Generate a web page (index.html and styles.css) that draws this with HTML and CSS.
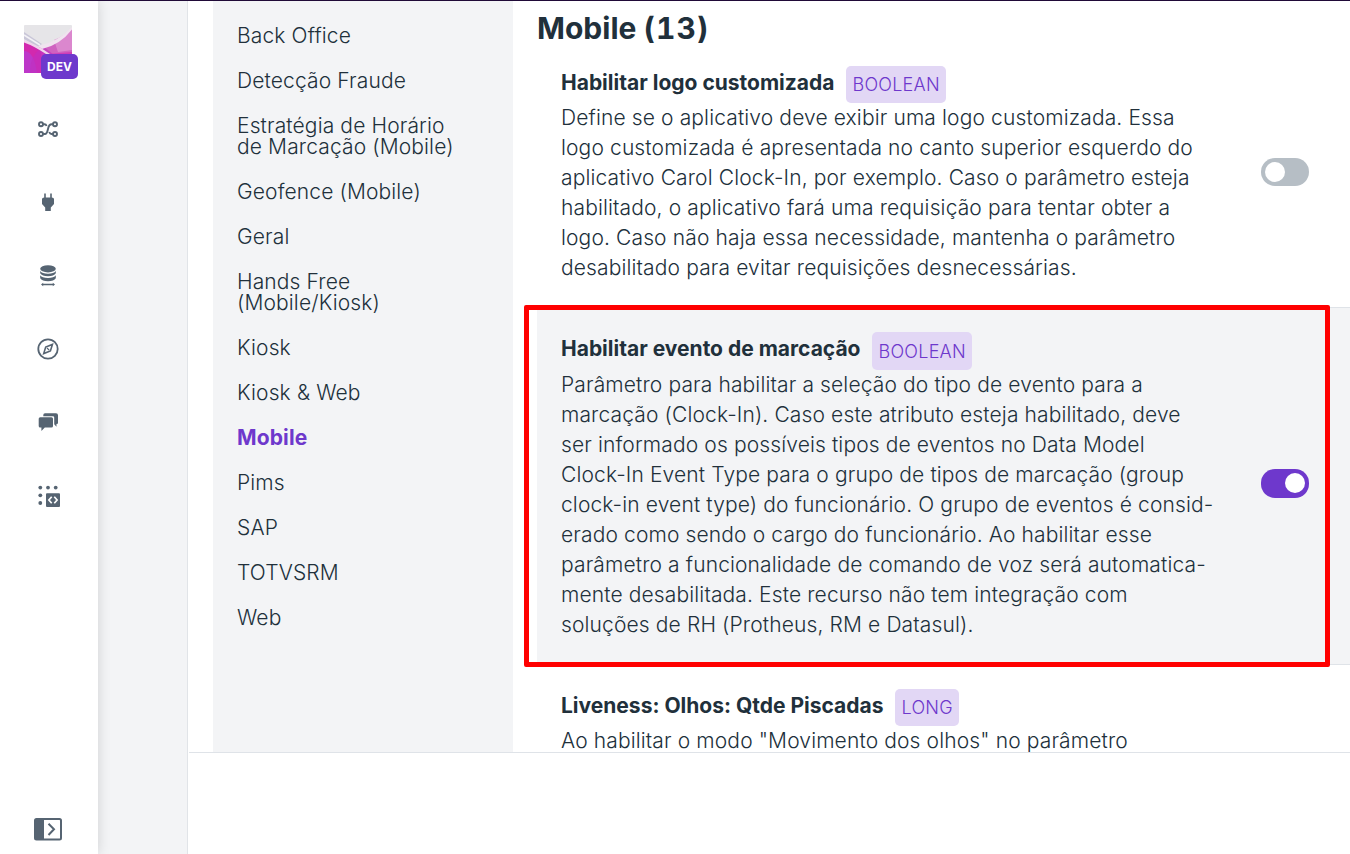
FILE: index.html
```html
<!DOCTYPE html>
<html lang="pt-BR">
  <head>
    <meta charset="utf-8" />
    <meta name="viewport" content="width=device-width, initial-scale=1" />
    <title>Mobile (13)</title>
    <link rel="stylesheet" href="styles.css">
  </head>
  <body>
    <div class="layout">
      <aside class="sidebar">
        <div class="logo">
          <svg width="48" height="48" viewBox="0 0 48 48">
            <rect width="48" height="48" rx="1" fill="#e6e5e8"/>
            <path d="M0 7 L18 19 L14 22 L0 14Z" fill="#c9c6d8"/>
            <path d="M0 10 L16 20" stroke="#f3f2f6" stroke-width="1.5"/>
            <path d="M14 22 Q34 17 48 4 V48 H14Z" fill="#cf62c0"/>
            <path d="M30 15 Q40 11 48 4 V25 L34 27Z" fill="#db87ce"/>
            <path d="M0 16 Q12 21 24 29 L48 27 V48 H0Z" fill="#d03cb6"/>
            <path d="M0 16 Q10 20 17 27 V48 H0Z" fill="#d229ae"/>
            <path d="M0 26 Q10 26 13 48 H0Z" fill="#bd37c9"/>
            <path d="M6 48 Q6 28 20 22 L30 30 Q16 32 16 48Z" fill="#c02fc0" opacity="0.6"/>
            <path d="M14 21 Q34 17 48 2 V4.5 Q36 20 18 24Z" fill="#f0e3ef"/>
            <path d="M0 15 Q12 19 26 29 H22 Q10 21 0 17.5Z" fill="#f0d4ec"/>
          </svg>
          <span class="env">DEV</span>
        </div>
        <nav class="menu">
          <!-- flow -->
          <svg width="24" height="24" viewBox="0 0 24 24" fill="none" stroke="#566472" stroke-width="1.9">
            <circle cx="5" cy="7.3" r="2"/><circle cx="19" cy="7.3" r="2"/>
            <circle cx="5" cy="17" r="2"/><circle cx="19" cy="17" r="2"/>
            <path d="M7 7.3H8.5Q10 7.3 10.6 9M7 17H9Q11 17 12 12T16 7.3H17M13.2 15Q14 17 15.5 17H17"/>
          </svg>
          <!-- plug -->
          <svg width="24" height="24" viewBox="0 0 24 24" fill="#566472">
            <path d="M8.2 3.5H9.8V7.5H14.2V3.5H15.8V7.5Q18 7.5 18 9V14L14.8 17.5V21H9.2V17.5L6 14V9Q6 7.5 8.2 7.5Z"/>
          </svg>
          <!-- database -->
          <svg width="24" height="24" viewBox="0 0 24 24" fill="#566472">
            <ellipse cx="12" cy="4.8" rx="7.8" ry="3.6"/>
            <path d="M4.2 7Q6 9.7 12 9.7T19.8 7V9.3Q18 12.3 12 12.3T4.2 9.3Z"/>
            <path d="M4.2 11.3Q6 14 12 14T19.8 11.3V14.2Q18 17.2 12 17.2T4.2 14.2Z"/>
            <path d="M5 20.5L7.2 18.8V19.8H16.8V18.8L19 20.5L16.8 22.2V21.2H7.2V22.2Z"/>
          </svg>
          <!-- compass -->
          <svg width="24" height="24" viewBox="0 0 24 24" fill="none" stroke="#566472">
            <circle cx="12" cy="12" r="9.7" stroke-width="1.8"/>
            <path d="M16.4 7.4L14.4 14L7.7 16.6L9.7 10Z" stroke-width="1.6"/>
            <path d="M11 11L13.2 13.2" stroke-width="1.2"/>
          </svg>
          <!-- chat -->
          <svg width="24" height="24" viewBox="0 0 24 24" fill="#566472">
            <path d="M9 2.3H20Q22 2.3 22 4.3V12.3Q22 13 20.5 13V15.8L18.2 13.3V6.5Q18.2 5.2 16.9 5.2H7.3V4Q7.3 2.3 9 2.3Z"/>
            <path d="M4.2 6.3H15.5Q17 6.3 17 7.8V15.1Q17 16.6 15.5 16.6H8.8L5.4 20.1V16.6H4.2Q2.7 16.6 2.7 15.1V7.8Q2.7 6.3 4.2 6.3Z"/>
          </svg>
          <!-- applications -->
          <svg width="24" height="24" viewBox="0 0 24 24" fill="#566472">
            <circle cx="4.3" cy="3.6" r="1.9"/><circle cx="12" cy="3.6" r="1.9"/><circle cx="19.7" cy="3.6" r="1.9"/>
            <circle cx="4.3" cy="11.3" r="1.9"/><circle cx="4.3" cy="19" r="1.9"/>
            <rect x="10" y="9.3" width="14" height="13.6" rx="1"/>
            <path d="M15.7 12.8L12.9 16L15.7 19.2M18.3 12.8L21.1 16L18.3 19.2" fill="none" stroke="#fff" stroke-width="1.7"/>
          </svg>
        </nav>
        <svg class="expand" width="28" height="23" viewBox="0 0 28 23">
          <rect x="1" y="1" width="26" height="20.6" rx="1.5" fill="#fff" stroke="#566472" stroke-width="2"/>
          <rect x="1" y="1" width="9" height="20.6" fill="#566472"/>
          <path d="M14.5 5.7L20 11.3L14.5 17" fill="none" stroke="#566472" stroke-width="2"/>
        </svg>
      </aside>

      <main class="page">
        <div class="panel">
          <ul class="groups">
            <li>Back Office</li>
            <li>Detecção Fraude</li>
            <li>Estratégia de Horário<br>de Marcação (Mobile)</li>
            <li>Geofence (Mobile)</li>
            <li>Geral</li>
            <li>Hands Free<br>(Mobile/Kiosk)</li>
            <li>Kiosk</li>
            <li>Kiosk &amp; Web</li>
            <li class="active">Mobile</li>
            <li>Pims</li>
            <li>SAP</li>
            <li>TOTVSRM</li>
            <li>Web</li>
          </ul>

          <section class="params">
            <h1>Mobile <span class="count">(13)</span></h1>

            <div class="param">
              <div class="info">
                <div class="name"><b>Habilitar logo customizada</b><span class="type">BOOLEAN</span></div>
                <p>Define se o aplicativo deve exibir uma logo customizada. Essa<br>
                logo customizada é apresentada no canto superior esquerdo do<br>
                aplicativo Carol Clock-In, por exemplo. Caso o parâmetro esteja<br>
                habilitado, o aplicativo fará uma requisição para tentar obter a<br>
                logo. Caso não haja essa necessidade, mantenha o parâmetro<br>
                desabilitado para evitar requisições desnecessárias.</p>
              </div>
              <span class="toggle"></span>
            </div>

            <div class="param selected">
              <div class="info">
                <div class="name"><b>Habilitar evento de marcação</b><span class="type">BOOLEAN</span></div>
                <p>Parâmetro para habilitar a seleção do tipo de evento para a<br>
                marcação (Clock-In). Caso este atributo esteja habilitado, deve<br>
                ser informado os possíveis tipos de eventos no Data Model<br>
                Clock-In Event Type para o grupo de tipos de marcação (group<br>
                clock-in event type) do funcionário. O grupo de eventos é consid-<br>
                erado como sendo o cargo do funcionário. Ao habilitar esse<br>
                parâmetro a funcionalidade de comando de voz será automatica-<br>
                mente desabilitada. Este recurso não tem integração com<br>
                soluções de RH (Protheus, RM e Datasul).</p>
              </div>
              <span class="toggle on"></span>
              <div class="marker"></div>
            </div>

            <div class="param last">
              <div class="info">
                <div class="name"><b>Liveness: Olhos: Qtde Piscadas</b><span class="type">LONG</span></div>
                <p>Ao habilitar o modo "Movimento dos olhos" no parâmetro</p>
              </div>
            </div>
          </section>
        </div>
      </main>
    </div>
  </body>
</html>
```

FILE: styles.css
```css
*{
    box-sizing:border-box;
}
body{
    margin:0;
    height:854px;
    overflow:hidden;
    border-top:1px solid #200a38;
    background-color:#f3f4f6;
    color:#21303b;
    font-family:Inter, "Liberation Sans", sans-serif;
    font-size:21px;
    font-weight:320;
}
.layout{
    display:flex;
    height:853px;
}

/* left bar */
.sidebar{
    display:flex;
    flex-direction:column;
    align-items:center;
    width:98px;
    padding:24px 0 13px;
    background-color:#fff;
    box-shadow:0 0 12px rgba(0,0,0,0.15);
}
.logo{
    position:relative;
    width:48px;
    height:48px;
    margin-right:2px;
}
.env{
    position:absolute;
    left:17px;
    top:29px;
    width:37px;
    height:25px;
    border-radius:5px;
    background-color:#6e38cc;
    color:#fff;
    font-size:12px;
    font-weight:700;
    line-height:26px;
    text-align:center;
}
.menu{
    display:flex;
    flex-direction:column;
    gap:49.4px;
    margin:44px 2px 0 0;
}
.menu svg{
    display:block;
}
.expand{
    margin:auto 2px 0 0;
}

/* content */
.page{
    flex:1;
    margin-left:89px;
    border-left:1px solid #e1e4e8;
    background-color:#fff;
}
.panel{
    display:flex;
    height:752px;
    margin-left:1px;
    padding-left:24px;
    overflow:hidden;
    border-bottom:1px solid #dfe3e8;
}
.groups{
    display:flex;
    flex-direction:column;
    gap:24px;
    width:300px;
    margin:0;
    padding:24px;
    background-color:#f3f4f6;
    line-height:21px;
    letter-spacing:0.13px;
    list-style:none;
    white-space:nowrap;
}
.groups .active{
    color:#6e38cc;
    font-weight:650;
}
.params{
    flex:1;
    padding-left:24px;
}
h1{
    height:39px;
    margin:0;
    padding-top:9px;
    font-size:30px;
    font-weight:650;
    line-height:36px;
}
.count{
    font-variant-numeric:tabular-nums;
    letter-spacing:0.9px;
}
.param{
    position:relative;
    display:flex;
    align-items:center;
    justify-content:space-between;
    padding:24px 41px 24px 24px;
}
.selected{
    background-color:#f3f4f6;
    box-shadow:inset 0 1px #dfe3e8, 0 1px #dfe3e8;
}
.name{
    display:flex;
    align-items:flex-start;
    height:39px;
    padding-top:2px;
    line-height:34px;
}
.name b{
    font-weight:650;
}
.type{
    height:37px;
    margin-left:12px;
    padding:0 6px;
    border-radius:5px;
    background-color:#e2d7f5;
    color:#6e38cc;
    font-size:18px;
    line-height:38px;
    letter-spacing:0.25px;
}
.selected .name{
    padding-top:1px;
}
.selected .type{
    height:38px;
    line-height:40px;
}
.last{
    padding-top:23px;
}
.param p{
    margin:0;
    line-height:30px;
    letter-spacing:0.13px;
    white-space:nowrap;
}
.toggle{
    width:48px;
    height:28px;
    margin-bottom:3px;
    padding:4px;
    border-radius:14px;
    background-color:#b6bec5;
}
.toggle::before{
    content:"";
    display:block;
    width:20px;
    height:20px;
    border-radius:50%;
    background-color:#fff;
}
.on{
    height:29px;
    margin-bottom:4px;
    background-color:#6e38cc;
}
.on::before{
    margin-left:20px;
}
.marker{
    position:absolute;
    left:-13px;
    top:-2px;
    width:806px;
    height:362px;
    border:5px solid #ff0000;
    border-radius:2px;
}
```
